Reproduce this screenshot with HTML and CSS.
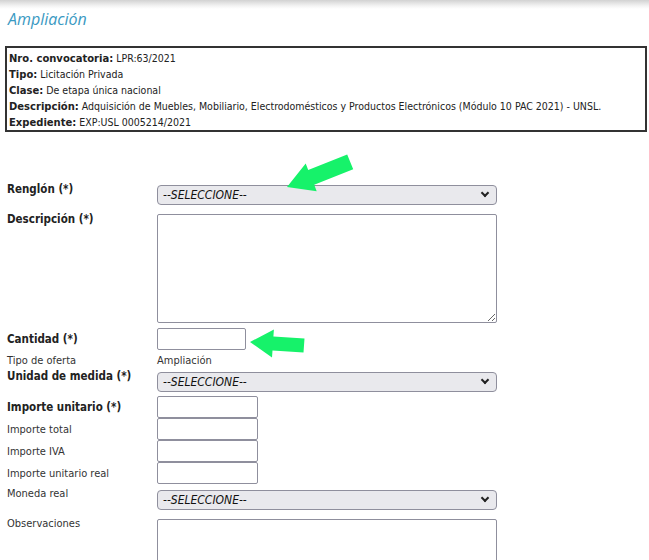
FILE: index.html
```html
<!DOCTYPE html>
<html lang="es">
<head>
  <meta charset="UTF-8">
  <title>Ampliación</title>
  <link rel="stylesheet" href="styles.css">
</head>
<body>
  <div class="topbar"></div>
  <h2 class="title">Ampliación</h2>

  <div class="info">
    <div><b>Nro. convocatoria:</b> LPR:63/2021</div>
    <div><b>Tipo:</b> Licitación Privada</div>
    <div><b>Clase:</b> De etapa única nacional</div>
    <div><b>Descripción:</b> Adquisición de Muebles, Mobiliario, Electrodomésticos y Productos Electrónicos (Módulo 10 PAC 2021) - UNSL.</div>
    <div><b>Expediente:</b> EXP:USL 0005214/2021</div>
  </div>

  <form class="form">
    <div class="row gap10">
      <label class="req">Renglón (*)</label>
      <span class="sel"><select><option>--SELECCIONE--</option></select></span>
    </div>
    <div class="row gap5">
      <label class="req">Descripción (*)</label>
      <textarea class="big"></textarea>
    </div>
    <div class="row mid gap2">
      <label class="req">Cantidad (*)</label>
      <input type="text" class="small">
    </div>
    <div class="row mid gap3 text-row">
      <label>Tipo de oferta</label>
      <span class="value">Ampliación</span>
    </div>
    <div class="row gap5">
      <label class="req">Unidad de medida (*)</label>
      <span class="sel"><select><option>--SELECCIONE--</option></select></span>
    </div>
    <div class="row mid">
      <label class="req">Importe unitario (*)</label>
      <input type="text" class="medium">
    </div>
    <div class="row mid">
      <label>Importe total</label>
      <input type="text" class="medium">
    </div>
    <div class="row mid">
      <label>Importe IVA</label>
      <input type="text" class="medium">
    </div>
    <div class="row mid gap5">
      <label>Importe unitario real</label>
      <input type="text" class="medium">
    </div>
    <div class="row gap10">
      <label>Moneda real</label>
      <span class="sel"><select><option>--SELECCIONE--</option></select></span>
    </div>
    <div class="row">
      <label>Observaciones</label>
      <textarea class="big"></textarea>
    </div>
  </form>

  <!-- flechas verdes de la captura -->
  <svg class="arrows" width="649" height="560" viewBox="0 0 649 560">
    <polygon points="287,187 305.7,163.5 308.2,170 347.2,154.5 353.2,169.3 314.2,184.8 316.7,191.3" fill="#16f26a"/>
    <polygon points="250,342 273.9,329.5 273.4,336.5 304.5,338.5 303.5,352.5 272.5,350.5 272,357.5" fill="#16f26a"/>
  </svg>
</body>
</html>
```

FILE: styles.css
```css
body {
  margin: 0;
  position: relative;
  font-family: "DejaVu Sans Condensed", "DejaVu Sans", sans-serif;
  font-stretch: condensed;
  color: #222;
  background: #fff;
}

.topbar {
  height: 9px;
  background: linear-gradient(#d2d2d2, #f4f4f4 6px, #fff);
}

.title {
  margin: 0 0 17px 8px;
  font-family: "Open Sans", sans-serif;
  font-stretch: normal;
  font-style: italic;
  font-weight: normal;
  font-size: 16px;
  line-height: 20px;
  color: #3a99c2;
}

.info {
  margin: 0 2px 0 5px;
  padding: 2px 0 0 2px;
  border: 2px solid #333;
  font-size: 10.5px;
  color: #222;
  white-space: nowrap;
}
.info div {
  height: 16px;
  line-height: 16px;
}
.info b {
  font-family: "DejaVu Sans", sans-serif;
  font-stretch: normal;
  font-size: 10px;
  line-height: 10px;
}

.form {
  margin-top: 52px;
  padding-left: 7px;
}

.row {
  display: flex;
  align-items: flex-start;
}
.row.mid {
  align-items: center;
}
.gap2 { margin-bottom: 2px; }
.gap3 { margin-bottom: 3px; }
.gap5 { margin-bottom: 5px; }
.gap10 { margin-bottom: 10px; }

.row label {
  width: 150px;
  flex: none;
  margin-top: -2px;
  font-size: 11px;
  line-height: 13px;
  color: #333;
}
.row.mid label {
  margin-top: 0;
}
.row label.req {
  font-size: 11.5px;
  line-height: 14px;
  font-weight: bold;
  color: #222;
}

.text-row {
  height: 16px;
}
.value {
  font-size: 11px;
  color: #333;
}

.sel {
  position: relative;
  display: block;
  width: 340px;
  height: 20px;
}
.sel select {
  appearance: none;
  -webkit-appearance: none;
  box-sizing: border-box;
  width: 340px;
  height: 20px;
  margin: 0;
  padding: 0 0 0 5px;
  border: 1px solid #8f8f9d;
  border-radius: 4px;
  background: #e9e9ed;
  font-family: "DejaVu Sans Condensed", "DejaVu Sans", sans-serif;
  font-stretch: condensed;
  font-style: italic;
  font-size: 12px;
  color: #111;
}
.sel::after {
  content: "";
  position: absolute;
  right: 9px;
  top: 6px;
  width: 4px;
  height: 4px;
  border-right: 2px solid #222;
  border-bottom: 2px solid #222;
  transform: rotate(45deg);
  pointer-events: none;
}

input.small,
input.medium {
  box-sizing: border-box;
  height: 22px;
  margin: 0;
  border: 1px solid #8f8f9d;
  border-radius: 2px;
  background: #fff;
}
input.small { width: 89px; }
input.medium { width: 101px; }

textarea.big {
  box-sizing: border-box;
  width: 340px;
  height: 109px;
  margin: 0;
  border: 1px solid #8f8f9d;
  border-radius: 2px;
  background: #fff;
}

.arrows {
  position: absolute;
  left: 0;
  top: 0;
  pointer-events: none;
}
```
